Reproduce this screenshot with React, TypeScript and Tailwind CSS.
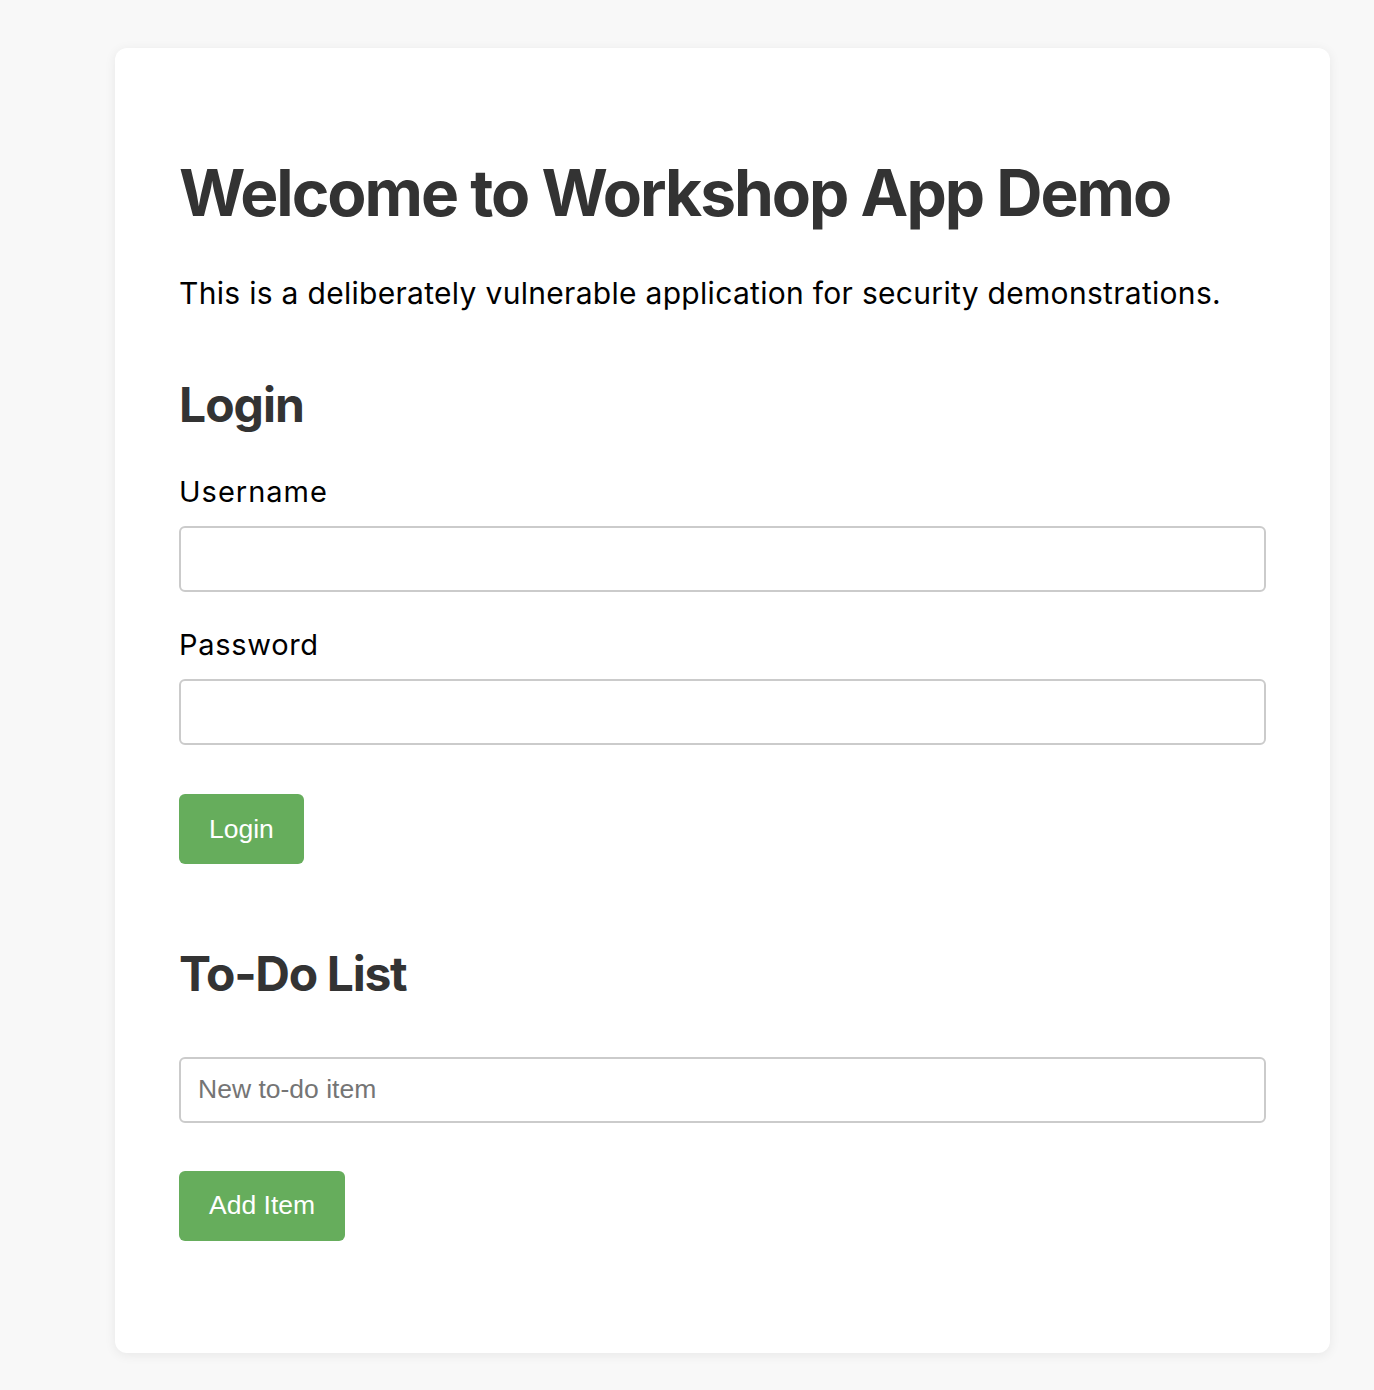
import React, { useState } from 'react';

const inter = "font-['Inter','Noto_Sans',sans-serif]";
const arial = "font-['Liberation_Sans',Arial,sans-serif]";

const App: React.FC = () => {
  const [user, setUser] = useState('');
  const [pass, setPass] = useState('');
  const [item, setItem] = useState('');

  return (
    <div className="min-h-[1390px] bg-[#f8f8f8] pt-[48px] pl-[115px]">
      <div className={`w-[1215px] h-[1305px] rounded-[12px] bg-white shadow-[0_2px_12px_rgba(0,0,0,0.07)] px-[64px] pt-[64px] ${inter}`}>
        <h1 className="mt-[43px] text-[64px] leading-[1.2] font-bold text-[#333] tracking-[-2px]">
          Welcome to Workshop App Demo
        </h1>
        <p className="mt-[43px] text-[30px] leading-[36px] text-black tracking-[0.3px]">
          This is a deliberately vulnerable application for security demonstrations.
        </p>

        <h2 className="mt-[65px] text-[48px] leading-[1.2] font-bold text-[#333] tracking-[-1px]">Login</h2>
        <label className="block mt-[42px] text-[29px] leading-[34px] text-black tracking-[1px]">Username</label>
        <input
          value={user}
          onChange={(e) => setUser(e.target.value)}
          className={`block mt-[17px] w-full h-[66px] rounded-[6px] border-2 border-[#cbcbcb] px-[17px] text-[26.5px] outline-none ${arial}`}
        />
        <label className="block mt-[36px] text-[29px] leading-[34px] text-black tracking-[0.7px]">Password</label>
        <input
          type="password"
          value={pass}
          onChange={(e) => setPass(e.target.value)}
          className={`block mt-[17px] w-full h-[66px] rounded-[6px] border-2 border-[#cbcbcb] px-[17px] text-[26.5px] outline-none ${arial}`}
        />
        <button className={`block mt-[49px] h-[70px] px-[30px] rounded-[6px] bg-[#66ad5c] text-white text-[26.5px] ${arial}`}>
          Login
        </button>

        <h2 className="mt-[81px] text-[48px] leading-[1.2] font-bold text-[#333] tracking-[-1.3px]">To-Do List</h2>
        <input
          value={item}
          onChange={(e) => setItem(e.target.value)}
          placeholder="New to-do item"
          className={`block mt-[54px] w-full h-[66px] rounded-[6px] border-2 border-[#cbcbcb] px-[17px] text-[26.5px] placeholder:text-[#757575] outline-none ${arial}`}
        />
        <button className={`block mt-[48px] h-[70px] px-[30px] rounded-[6px] bg-[#66ad5c] text-white text-[26.5px] ${arial}`}>
          Add Item
        </button>
      </div>
    </div>
  );
};

export default App;
